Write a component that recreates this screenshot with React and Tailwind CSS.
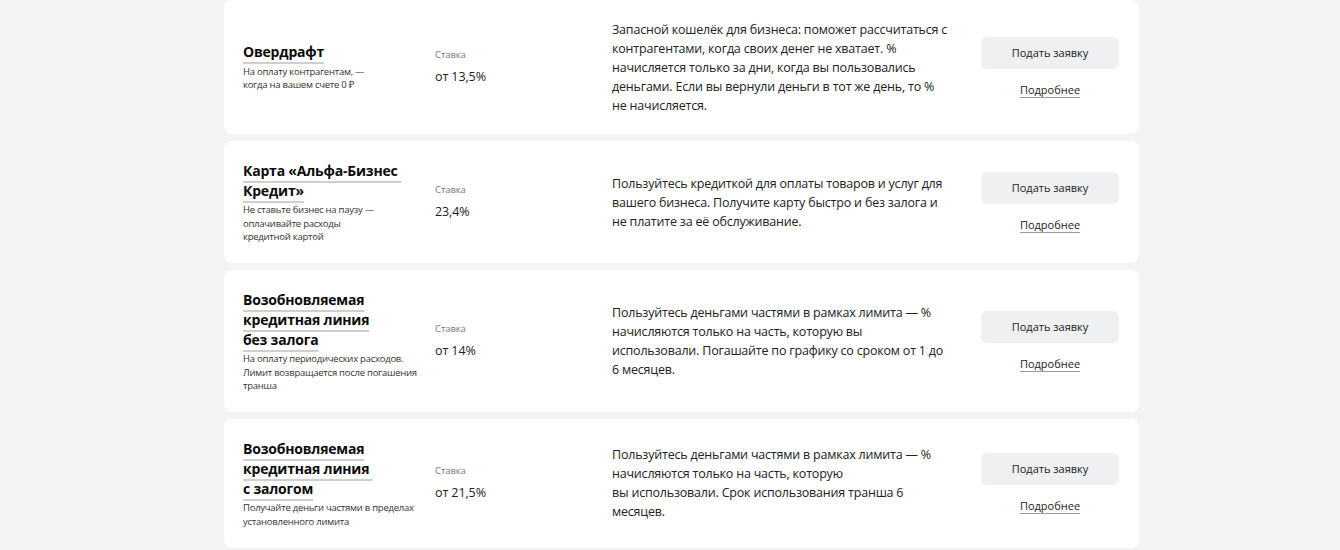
const products = [
  {
    title: ["Овердрафт"],
    sub: ["На оплату контрагентам, —", "когда на вашем счете 0 ₽"],
    rate: "от 13,5%",
    desc: [
      "Запасной кошелёк для бизнеса: поможет рассчитаться с",
      "контрагентами, когда своих денег не хватает. %",
      "начисляется только за дни, когда вы пользовались",
      "деньгами. Если вы вернули деньги в тот же день, то %",
      "не начисляется.",
    ],
  },
  {
    title: ["Карта «Альфа-Бизнес ", "Кредит»"],
    sub: ["Не ставьте бизнес на паузу —", "оплачивайте расходы", "кредитной картой"],
    rate: "23,4%",
    desc: [
      "Пользуйтесь кредиткой для оплаты товаров и услуг для",
      "вашего бизнеса. Получите карту быстро и без залога и",
      "не платите за её обслуживание.",
    ],
  },
  {
    title: ["Возобновляемая", "кредитная линия", "без залога"],
    sub: ["На оплату периодических расходов.", "Лимит возвращается после погашения", "транша"],
    rate: "от 14%",
    desc: [
      "Пользуйтесь деньгами частями в рамках лимита — %",
      "начисляются только на часть, которую вы",
      "использовали. Погашайте по графику со сроком от 1 до",
      "6 месяцев.",
    ],
  },
  {
    title: ["Возобновляемая", "кредитная линия ", "с залогом"],
    sub: ["Получайте деньги частями в пределах", "установленного лимита"],
    rate: "от 21,5%",
    desc: [
      "Пользуйтесь деньгами частями в рамках лимита — %",
      "начисляются только на часть, которую",
      "вы использовали. Срок использования транша 6",
      "месяцев.",
    ],
  },
];

function ProductCard({ item }) {
  return (
    <div className="flex items-center rounded-lg bg-white py-[19.5px] pl-[19px]">
      {/* Title */}
      <div className="w-[192px] shrink-0">
        <div className="text-[14px] font-bold leading-[20px] tracking-[-0.2px] text-[#0b0b0b]">
          {item.title.map((line) => (
            <div key={line}>
              <span className="whitespace-pre underline decoration-[#cfcfcf] decoration-[2px] underline-offset-[5px]">
                {line}
              </span>
            </div>
          ))}
        </div>
        <div className="mt-[2.5px] text-[9.5px] leading-[13.5px] tracking-[-0.25px] text-[#333]">
          {item.sub.map((line) => (
            <div key={line}>{line}</div>
          ))}
        </div>
      </div>

      {/* Rate */}
      <div className="w-[177px] shrink-0 self-center">
        <div className="text-[9.5px] leading-[14px] tracking-[-0.1px] text-[#777]">Ставка</div>
        <div className="mt-[6px] text-[12.5px] leading-[18px] tracking-[-0.1px] text-[#222]">
          {item.rate}
        </div>
      </div>

      {/* Description */}
      <div className="w-[369px] shrink-0 text-[12.5px] leading-[19px] tracking-[-0.2px] text-[#222]">
        {item.desc.map((line) => (
          <div key={line} className="whitespace-nowrap">
            {line}
          </div>
        ))}
      </div>

      {/* Actions */}
      <div className="flex w-[138px] shrink-0 flex-col items-center">
        <button className="h-[32px] w-[138px] rounded-md bg-[#eff0f1] text-[11px] font-medium text-[#222]">
          Подать заявку
        </button>
        <a
          href="#"
          className="mt-[14px] text-[11px] leading-[14px] text-[#222] underline decoration-[#999] underline-offset-[3px]"
        >
          Подробнее
        </a>
      </div>
    </div>
  );
}

export default function App() {
  return (
    <div
      className="min-h-[550px] bg-[#f3f4f5]"
      style={{ fontFamily: '"Open Sans", "Noto Sans", sans-serif' }}
    >
      <div className="ml-[224px] flex w-[915px] flex-col gap-[7px]">
        {products.map((item) => (
          <ProductCard key={item.rate} item={item} />
        ))}
      </div>
    </div>
  );
}
